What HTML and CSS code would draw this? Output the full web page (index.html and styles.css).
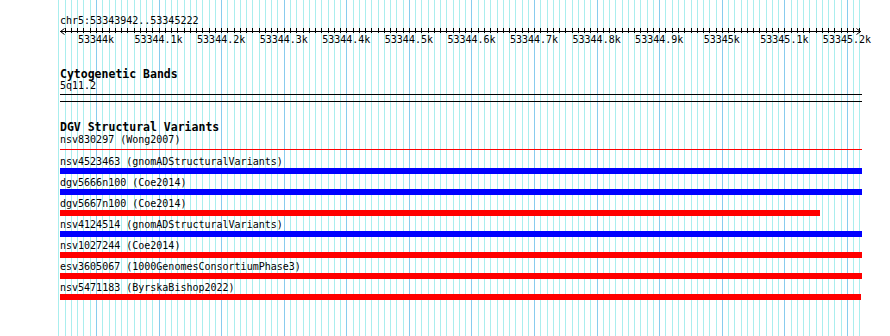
FILE: index.html
```html
<!DOCTYPE html>
<html lang="en">
  <head>
    <meta charset="UTF-8" />
    <meta name="viewport" content="width=device-width, initial-scale=1.0" />
    <title>chr5:53343942..53345222</title>
    <link rel="stylesheet" href="styles.css">
  </head>
  <body>
    <div class="view">
      <svg class="grid" id="grid" width="890" height="336"></svg>

      <!-- Ruler -->
      <div class="ruler">
        <div class="ref-name">chr5:53343942..53345222</div>
        <div class="scale" id="scale">
          <svg class="axis" id="axis" width="890" height="8"></svg>
        </div>
      </div>

      <!-- Cytogenetic Bands -->
      <div class="track cyto">
        <div class="track-title">Cytogenetic Bands</div>
        <div class="feature-label">5q11.2</div>
        <div class="band"></div>
      </div>

      <!-- DGV Structural Variants -->
      <div class="track dgv">
        <div class="track-title">DGV Structural Variants</div>
        <div class="features" id="features"></div>
      </div>
    </div>

    <script>
      const viewStart = 53343942;
      const viewEnd = 53345222;
      const originX = 59.7; // page x of viewStart
      const bpPerPx = 0.6258;

      function toX(bp) {
        return originX + (bp - viewStart) * bpPerPx;
      }

      const svgNS = "http://www.w3.org/2000/svg";

      function line(parent, x1, y1, x2, y2, cls) {
        const l = document.createElementNS(svgNS, "line");
        l.setAttribute("x1", x1);
        l.setAttribute("y1", y1);
        l.setAttribute("x2", x2);
        l.setAttribute("y2", y2);
        l.setAttribute("class", cls);
        parent.appendChild(l);
      }

      // Grid lines and ruler ticks, every 10bp
      const grid = document.getElementById("grid");
      const axis = document.getElementById("axis");
      const scale = document.getElementById("scale");

      for (let bp = Math.floor(viewStart / 10) * 10; bp <= viewEnd; bp += 10) {
        const x = Math.round(toX(bp)) + 0.5;
        if (x < 58 || x > 863) continue;
        const major = bp % 100 === 0;
        line(grid, x, 0, x, 336, major ? "major" : "minor");
        if (x > 61 && x < 860) line(axis, x, 1, x, 6, "tick");

        if (major) {
          const label = document.createElement("span");
          label.className = "scale-label";
          label.style.left = toX(bp) + "px";
          label.textContent = bp % 1000 === 0 ? bp / 1000 + "k" : (bp / 1000).toFixed(1) + "k";
          scale.appendChild(label);
        }
      }

      // axis with arrows at both ends
      line(axis, 60, 4.5, 861, 4.5, "tick");
      line(axis, 60.5, 4.5, 64.5, 1.5, "tick");
      line(axis, 60.5, 4.5, 64.5, 7.5, "tick");
      line(axis, 860.5, 4.5, 856.5, 1.5, "tick");
      line(axis, 860.5, 4.5, 856.5, 7.5, "tick");

      // DGV features
      const features = [
        { name: "nsv830297", source: "Wong2007", kind: "line", width: 802 },
        { name: "nsv4523463", source: "gnomADStructuralVariants", kind: "blue", width: 802 },
        { name: "dgv5666n100", source: "Coe2014", kind: "blue", width: 802 },
        { name: "dgv5667n100", source: "Coe2014", kind: "red", width: 760 },
        { name: "nsv4124514", source: "gnomADStructuralVariants", kind: "blue", width: 802 },
        { name: "nsv1027244", source: "Coe2014", kind: "red", width: 802 },
        { name: "esv3605067", source: "1000GenomesConsortiumPhase3", kind: "red", width: 802 },
        { name: "nsv5471183", source: "ByrskaBishop2022", kind: "red", width: 801 },
      ];

      const list = document.getElementById("features");
      features.forEach((f) => {
        const row = document.createElement("div");
        row.className = "feature feature-" + f.kind;
        row.innerHTML = `
          <div class="feature-label">${f.name} (${f.source})</div>
          <div class="glyph"><div class="bar" style="width: ${f.width}px"></div></div>
        `;
        list.appendChild(row);
      });
    </script>
  </body>
</html>
```

FILE: styles.css
```css
body {
  margin: 0;
  background-color: #fff;
  font-family: "DejaVu Sans Mono", monospace;
  font-size: 10px;
  color: #000;
}
.view {
  position: relative;
  width: 890px;
  height: 336px;
  overflow: hidden;
}
.grid {
  position: absolute;
  top: 0;
  left: 0;
}
.grid .minor {
  stroke: #aaeeee;
  stroke-width: 1;
}
.grid .major {
  stroke: #88ccee;
  stroke-width: 1;
}
.ruler,
.track {
  position: relative;
}
.ruler {
  padding-top: 15px;
}
.ref-name {
  padding-left: 60px;
  line-height: 12px;
}
.scale {
  position: relative;
  height: 20px;
}
.axis {
  position: absolute;
  top: 0;
  left: 0;
}
.axis .tick {
  stroke: #000;
  stroke-width: 1;
}
.scale-label {
  position: absolute;
  top: 6.5px;
  line-height: 12px;
  transform: translateX(-50%);
  white-space: nowrap;
}
.track {
  padding-left: 60px;
}
.track-title {
  font-weight: bold;
  font-size: 11.5px;
  line-height: 12px;
}
.feature-label {
  line-height: 12px;
  white-space: nowrap;
}
.cyto {
  margin-top: 21px;
}
.band {
  margin-top: 2px;
  width: 802px;
  height: 6px;
  border-top: 1px solid #000;
  border-bottom: 1px solid #000;
}
.dgv {
  margin-top: 19px;
}
.features {
  margin-top: 1px;
}
.feature {
  margin-bottom: 3px;
}
.glyph {
  height: 6px;
}
.bar {
  height: 6px;
}
.feature-blue .bar {
  background-color: #0000ff;
}
.feature-red .bar {
  background-color: #ff0000;
}
.feature-line {
  margin-bottom: 4px;
}
.feature-line .glyph {
  height: 3px;
  padding-top: 3px;
}
.feature-line .bar {
  height: 1px;
  background-color: #ff0000;
}
```
